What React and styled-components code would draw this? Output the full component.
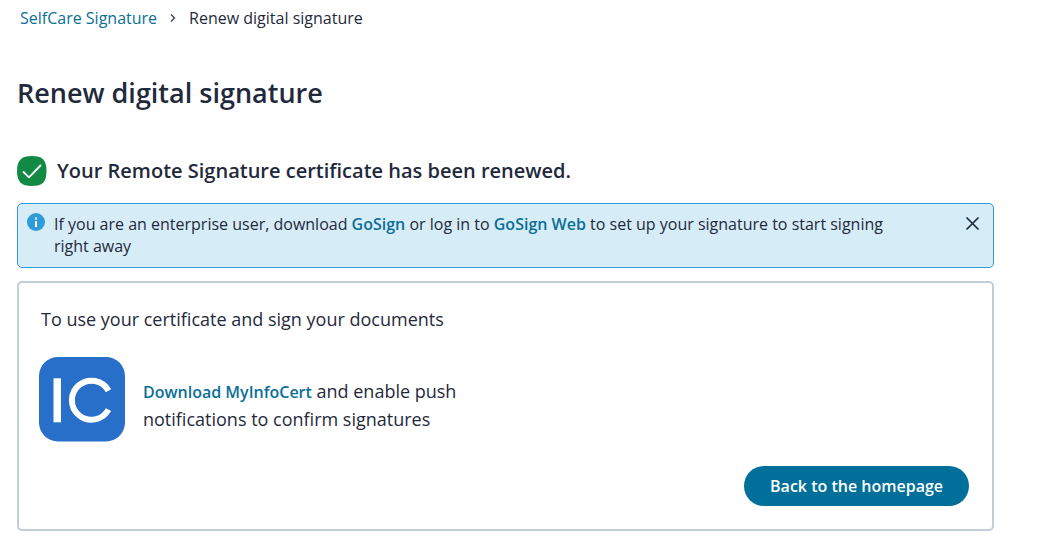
import React, { useState } from "react";
import styled, { createGlobalStyle } from "styled-components";

const GlobalStyle = createGlobalStyle`
  *, *::before, *::after {
    box-sizing: border-box;
  }

  body {
    margin: 0;
    background: #ffffff;
    color: #1f2a3c;
    font-family: "Open Sans", "Noto Sans", sans-serif;
    font-size: 16px;
    line-height: 22px;
  }
`;

const Page = styled.main`
  padding: 7px 44px 22px 17px;
`;

const Breadcrumb = styled.nav`
  display: flex;
  align-items: center;
  gap: 13px;
  padding-left: 3px;
`;

const Link = styled.a`
  color: #0b6f96;
  font-size: 16px;
  font-weight: ${({ $strong }) => ($strong ? 600 : 400)};
  text-decoration: none;

  &:hover {
    text-decoration: underline;
  }
`;

const Title = styled.h1`
  margin: 44px 0 0;
  font-size: 27px;
  line-height: 40px;
  font-weight: 600;
`;

const Status = styled.div`
  display: flex;
  align-items: center;
  gap: 10px;
  margin-top: 43px;
`;

const StatusText = styled.h2`
  margin: 0;
  font-size: 20px;
  line-height: 30px;
  font-weight: 600;
`;

const Notice = styled.div`
  display: flex;
  align-items: flex-start;
  gap: 9px;
  margin-top: 17px;
  padding: 9px 10px 10px 9px;
  border: 1px solid #2f9bd8;
  border-radius: 5px;
  background: #d6ecf7;
`;

const NoticeText = styled.p`
  flex: 1;
  margin: 0;
  padding-right: 60px;
`;

const CloseButton = styled.button`
  display: flex;
  padding: 3px;
  border: none;
  background: none;
  color: #1f2a3c;
  cursor: pointer;
`;

const Card = styled.section`
  margin-top: 13px;
  padding: 23px 23px 23px 20px;
  border: 2px solid #c1ced9;
  border-radius: 5px;
  font-size: 18px;
  line-height: 27px;
`;

const CardText = styled.p`
  margin: 0;
  padding-left: 2px;
`;

const AppRow = styled.div`
  display: flex;
  align-items: center;
  gap: 18px;
  margin-top: 24px;
`;

const AppText = styled.p`
  max-width: 330px;
  margin: 0;
  padding-top: 11px;
`;

const Actions = styled.div`
  display: flex;
  justify-content: flex-end;
  margin-top: 24px;
`;

const PrimaryButton = styled.button`
  padding: 9px 26px;
  border: none;
  border-radius: 20px;
  background: #006f99;
  color: #ffffff;
  font: inherit;
  font-size: 16px;
  line-height: 22px;
  font-weight: 600;
  cursor: pointer;
`;

const ChevronIcon = () => (
  <svg width="6" height="10" viewBox="0 0 6 10" fill="none" aria-hidden="true">
    <path d="M1 1.5L4.5 5L1 8.5" stroke="#3b4657" strokeWidth="1.4" />
  </svg>
);

const SuccessIcon = () => (
  <svg width="30" height="30" viewBox="0 0 30 30" fill="none" aria-hidden="true">
    <path
      d="M15 0C25.5 0 29.5 4 29.5 15S25.5 30 15 30S0 26 0 15S4.5 0 15 0Z"
      fill="#128a43"
    />
    <path
      d="M6.5 16L12 21.3L23.5 9.5"
      stroke="#ffffff"
      strokeWidth="1.8"
      strokeLinecap="round"
      strokeLinejoin="round"
    />
  </svg>
);

const InfoIcon = () => (
  <svg width="18" height="18" viewBox="0 0 18 18" aria-hidden="true">
    <circle cx="9" cy="9" r="9" fill="#2f9bd8" />
    <rect x="8" y="4.5" width="2" height="2" fill="#ffffff" />
    <rect x="8" y="8" width="2" height="6" fill="#ffffff" />
  </svg>
);

const CloseIcon = () => (
  <svg width="15" height="15" viewBox="0 0 15 15" fill="none" aria-hidden="true">
    <path d="M1.5 1.5L13.5 13.5M13.5 1.5L1.5 13.5" stroke="currentColor" strokeWidth="1.7" />
  </svg>
);

const AppLogo = () => (
  <svg width="86" height="85" viewBox="0 0 86 85" fill="none" aria-hidden="true">
    <rect width="86" height="84.5" rx="19" fill="#276fc8" />
    <rect x="14.5" y="21.3" width="7.5" height="44" fill="#ffffff" />
    <path
      d="M69.5 33.8A19.5 19.5 0 1 0 69.5 52.6"
      stroke="#ffffff"
      strokeWidth="6"
    />
  </svg>
);

const App = () => {
  const [showNotice, setShowNotice] = useState(true);

  return (
    <>
      <GlobalStyle />
      <Page>
        <Breadcrumb aria-label="Breadcrumb">
          <Link href="#">SelfCare Signature</Link>
          <ChevronIcon />
          <span aria-current="page">Renew digital signature</span>
        </Breadcrumb>

        <Title>Renew digital signature</Title>

        <Status>
          <SuccessIcon />
          <StatusText>Your Remote Signature certificate has been renewed.</StatusText>
        </Status>

        {showNotice && (
          <Notice>
            <InfoIcon />
            <NoticeText>
              If you are an enterprise user, download{" "}
              <Link href="#" $strong>GoSign</Link> or log in to{" "}
              <Link href="#" $strong>GoSign Web</Link> to set up your signature to start
              signing right away
            </NoticeText>
            <CloseButton type="button" aria-label="Close" onClick={() => setShowNotice(false)}>
              <CloseIcon />
            </CloseButton>
          </Notice>
        )}

        <Card>
          <CardText>To use your certificate and sign your documents</CardText>
          <AppRow>
            <AppLogo />
            <AppText>
              <Link href="#" $strong>Download MyInfoCert</Link> and enable push
              notifications to confirm signatures
            </AppText>
          </AppRow>
          <Actions>
            <PrimaryButton type="button">Back to the homepage</PrimaryButton>
          </Actions>
        </Card>
      </Page>
    </>
  );
};

export default App;
